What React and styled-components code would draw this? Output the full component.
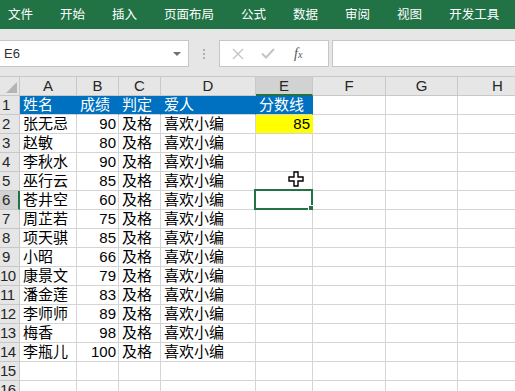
import styled, { createGlobalStyle } from "styled-components";

const GlobalStyle = createGlobalStyle`
  html, body {
    margin: 0;
    padding: 0;
    background: #ffffff;
    overflow: hidden;
  }
  body {
    font-family: "Liberation Sans", "Noto Sans CJK SC", sans-serif;
  }
`;

const Page = styled.div`
  width: 515px;
  height: 391px;
  overflow: hidden;
  position: relative;
  background: #ffffff;
`;

// 상단 리본 탭
const Ribbon = styled.div`
  height: 29px;
  background: #217346;
  display: flex;
  align-items: center;
  gap: 27px;
  padding-left: 8px;
`;

const Tab = styled.span`
  color: #ffffff;
  font-family: "Noto Sans CJK SC", sans-serif;
  font-size: 12.5px;
  line-height: 29px;
  padding-bottom: 2px;
  white-space: nowrap;
`;

const FormulaArea = styled.div`
  height: 48px;
  background: #e6e6e6;
  border-bottom: 1px solid #c8c8c8;
  display: flex;
  align-items: flex-start;
  padding-top: 11px;
  box-sizing: border-box;
`;

const NameBox = styled.div`
  width: 189px;
  height: 27px;
  box-sizing: border-box;
  background: #ffffff;
  border: 1px solid #c6c6c6;
  border-left: none;
  display: flex;
  align-items: center;
  justify-content: space-between;
  padding: 0 7px 0 4px;
  font-size: 13px;
  color: #333333;
`;

const Caret = styled.span`
  width: 0;
  height: 0;
  border-left: 4px solid transparent;
  border-right: 4px solid transparent;
  border-top: 4px solid #7a6a6a;
`;

const Dots = styled.div`
  width: 30px;
  height: 27px;
  display: flex;
  flex-direction: column;
  align-items: center;
  justify-content: center;
  gap: 2px;
  span {
    width: 2px;
    height: 2px;
    background: #b0b0b0;
  }
`;

const ButtonBox = styled.div`
  width: 110px;
  height: 27px;
  box-sizing: border-box;
  background: #ffffff;
  border: 1px solid #c6c6c6;
  display: flex;
  align-items: center;
  padding-left: 12px;
  gap: 17px;
`;

const Fx = styled.span`
  font-family: "Liberation Serif", serif;
  font-style: italic;
  font-size: 14px;
  color: #555555;
  margin-left: 2px;
  sub {
    font-size: 10px;
    vertical-align: baseline;
  }
`;

const FormulaInput = styled.div`
  flex: 1;
  height: 27px;
  margin-left: 3px;
  box-sizing: border-box;
  background: #ffffff;
  border: 1px solid #c6c6c6;
  border-right: none;
`;

const Sheet = styled.div`
  display: grid;
  grid-template-columns: 20px 57px 42px 42px 95px 57px 73px 72px 80px;
  grid-auto-rows: 19px;
`;

const Cell = styled.div`
  position: relative;
  box-sizing: border-box;
  border-right: 1px solid ${(p) => (p.$fill ? p.$fill : "#d4d4d4")};
  border-bottom: 1px solid #d4d4d4;
  background: ${(p) => p.$fill || "#ffffff"};
  color: ${(p) => (p.$light ? "#ffffff" : "#000000")};
  font-size: 15px;
  line-height: 18px;
  padding: 0 2px 0 3px;
  text-align: ${(p) => (p.$num ? "right" : "left")};
  white-space: nowrap;
  overflow: visible;
`;

const ColHead = styled.div`
  box-sizing: border-box;
  background: ${(p) => (p.$active ? "#d2d2d2" : "#e6e6e6")};
  border-right: 1px solid #c8c8c8;
  border-bottom: ${(p) => (p.$active ? "2px solid #217346" : "1px solid #c8c8c8")};
  color: #262626;
  font-size: 15px;
  line-height: 18px;
  text-align: center;
`;

const RowHead = styled.div`
  box-sizing: border-box;
  background: ${(p) => (p.$active ? "#d2d2d2" : "#e6e6e6")};
  border-right: ${(p) => (p.$active ? "2px solid #217346" : "1px solid #c8c8c8")};
  border-bottom: 1px solid #c8c8c8;
  color: #262626;
  font-size: 15px;
  line-height: 18px;
  padding-left: ${(p) => (p.$wide ? "0" : "2px")};
  letter-spacing: ${(p) => (p.$wide ? "-0.5px" : "0")};
  overflow: hidden;
  white-space: nowrap;
`;

const Corner = styled.div`
  box-sizing: border-box;
  background: #e6e6e6;
  border-right: 1px solid #c8c8c8;
  border-bottom: 1px solid #c8c8c8;
  position: relative;
  &::after {
    content: "";
    position: absolute;
    right: 2px;
    bottom: 2px;
    width: 0;
    height: 0;
    border-left: 11px solid transparent;
    border-bottom: 11px solid #b4b4b4;
  }
`;

const Selection = styled.div`
  position: absolute;
  left: -2px;
  top: -2px;
  right: -1px;
  bottom: -1px;
  border: 2px solid #217346;
  pointer-events: none;
  &::after {
    content: "";
    position: absolute;
    right: -4px;
    bottom: -4px;
    width: 5px;
    height: 5px;
    background: #217346;
    border: 1px solid #ffffff;
  }
`;

const Cursor = styled.svg`
  position: absolute;
  left: 288px;
  top: 171px;
`;

const tabs = ["文件", "开始", "插入", "页面布局", "公式", "数据", "审阅", "视图", "开发工具"];
const cols = ["A", "B", "C", "D", "E", "F", "G", "H"];

const data = [
  ["张无忌", 90],
  ["赵敏", 80],
  ["李秋水", 90],
  ["巫行云", 85],
  ["苍井空", 60],
  ["周芷若", 75],
  ["项天骐", 85],
  ["小昭", 66],
  ["康景文", 79],
  ["潘金莲", 83],
  ["李师师", 89],
  ["梅香", 98],
  ["李瓶儿", 100],
];

function App() {
  const rows = [];
  // 1행: 파란 헤더
  rows.push(
    <RowHead key="h1">1</RowHead>,
    <Cell key="a1" $fill="#0070c0" $light>姓名</Cell>,
    <Cell key="b1" $fill="#0070c0" $light>成绩</Cell>,
    <Cell key="c1" $fill="#0070c0" $light>判定</Cell>,
    <Cell key="d1" $fill="#0070c0" $light>爱人</Cell>,
    <Cell key="e1" $fill="#0070c0" $light>分数线</Cell>,
    <Cell key="f1" />,
    <Cell key="g1" />,
    <Cell key="i1" />
  );
  for (let r = 2; r <= 16; r++) {
    const d = data[r - 2];
    rows.push(
      <RowHead key={"h" + r} $active={r === 6} $wide={r >= 10}>
        {r}
      </RowHead>,
      <Cell key={"a" + r}>{d ? d[0] : ""}</Cell>,
      <Cell key={"b" + r} $num>{d ? d[1] : ""}</Cell>,
      <Cell key={"c" + r}>{d ? "及格" : ""}</Cell>,
      <Cell key={"d" + r}>{d ? "喜欢小编" : ""}</Cell>,
      r === 2 ? (
        <Cell key={"e" + r} $fill="#ffff00" $num>85</Cell>
      ) : (
        <Cell key={"e" + r}>{r === 6 && <Selection />}</Cell>
      ),
      <Cell key={"f" + r} />,
      <Cell key={"g" + r} />,
      <Cell key={"i" + r} />
    );
  }

  return (
    <Page>
      <GlobalStyle />
      <Ribbon>
        {tabs.map((t) => (
          <Tab key={t}>{t}</Tab>
        ))}
      </Ribbon>
      <FormulaArea>
        <NameBox>
          <span>E6</span>
          <Caret />
        </NameBox>
        <Dots>
          <span />
          <span />
          <span />
        </Dots>
        <ButtonBox>
          <svg width="12" height="12" viewBox="0 0 12 12">
            <path d="M1 1 L11 11 M11 1 L1 11" stroke="#c4c4c4" strokeWidth="1.4" fill="none" />
          </svg>
          <svg width="14" height="11" viewBox="0 0 14 11">
            <path d="M1 5.5 L5 9.5 L13 1" stroke="#c4c4c4" strokeWidth="2" fill="none" />
          </svg>
          <Fx>
            f<sub>x</sub>
          </Fx>
        </ButtonBox>
        <FormulaInput />
      </FormulaArea>
      <Sheet>
        <Corner />
        {cols.map((c) => (
          <ColHead key={c} $active={c === "E"}>
            {c}
          </ColHead>
        ))}
        {rows}
      </Sheet>
      <Cursor width="17" height="17" viewBox="0 0 17 17">
        <path
          d="M6 1 H10 V6 H15 V10 H10 V15 H6 V10 H1 V6 H6 Z"
          fill="#ffffff"
          stroke="#000000"
          strokeWidth="1.4"
        />
      </Cursor>
    </Page>
  );
}

export default App;
